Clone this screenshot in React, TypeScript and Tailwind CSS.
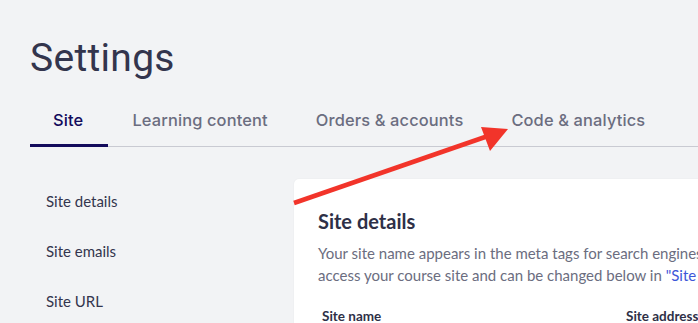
const tabs = ["Site", "Learning content", "Orders & accounts", "Code & analytics"]
const sideItems = ["Site details", "Site emails", "Site URL"]

function Arrow() {
  return (
    <svg
      className="pointer-events-none absolute left-0 top-0"
      width="698"
      height="323"
      viewBox="0 0 698 323"
    >
      <line x1="294" y1="203" x2="488" y2="136" stroke="#f2342a" strokeWidth="4.5" />
      <polygon points="508,129 481,127 490,151" fill="#f2342a" />
    </svg>
  )
}

export default function App() {
  return (
    <div className="relative h-[323px] w-[698px] overflow-hidden bg-[#f2f3f5]">
      <h1 className="pl-[30px] pt-[34px] font-['Roboto',sans-serif] text-[39px] leading-[48px] tracking-[0.3px] text-[#33354d]">
        Settings
      </h1>

      <nav className="ml-[30px] mt-[26px] flex border-b border-[#c9cad2] font-['Inter',sans-serif] text-[16.4px] font-medium leading-[24px] tracking-[0.15px]">
        {tabs.map((t, i) => (
          <div
            key={t}
            className={
              i === 0
                ? "-mb-px border-b-[3px] border-[#130b5c] pl-[23px] pr-[25px] pb-[11px] text-[#130b5c]"
                : "px-[24px] pb-[14px] text-[#6b6d80]"
            }
          >
            {t}
          </div>
        ))}
      </nav>

      <div className="flex font-['Lato',sans-serif]">
        <ul className="w-[294px] shrink-0 pl-[46px] pt-[43px] text-[15px] text-[#33354d]">
          {sideItems.map((s) => (
            <li key={s} className="h-[50px]">
              {s}
            </li>
          ))}
        </ul>

        <section className="mt-[32px] w-[700px] shrink-0 rounded-[5px] bg-white px-[24px] pt-[29px] shadow-[0_0_2px_rgba(0,0,0,0.06)]">
          <h2 className="text-[20px] font-bold leading-[26px] text-[#2e3047]">Site details</h2>
          <p className="mt-[8px] text-[15px] leading-[22px] text-[#6b6d80]">
            <span className="block whitespace-nowrap">
              Your site name appears in the meta tags for search engines and browser tabs.
            </span>
            <span className="block whitespace-nowrap">
              access your course site and can be changed below in{" "}
              <span className="text-[#3d56d8]">"Site URL"</span>.
            </span>
          </p>
          <div className="mt-[20px] grid grid-cols-[304px_1fr] pl-[4px] text-[13.5px] font-bold text-[#2e3047]">
            <div>Site name</div>
            <div>Site address</div>
          </div>
        </section>
      </div>

      <Arrow />
    </div>
  )
}
